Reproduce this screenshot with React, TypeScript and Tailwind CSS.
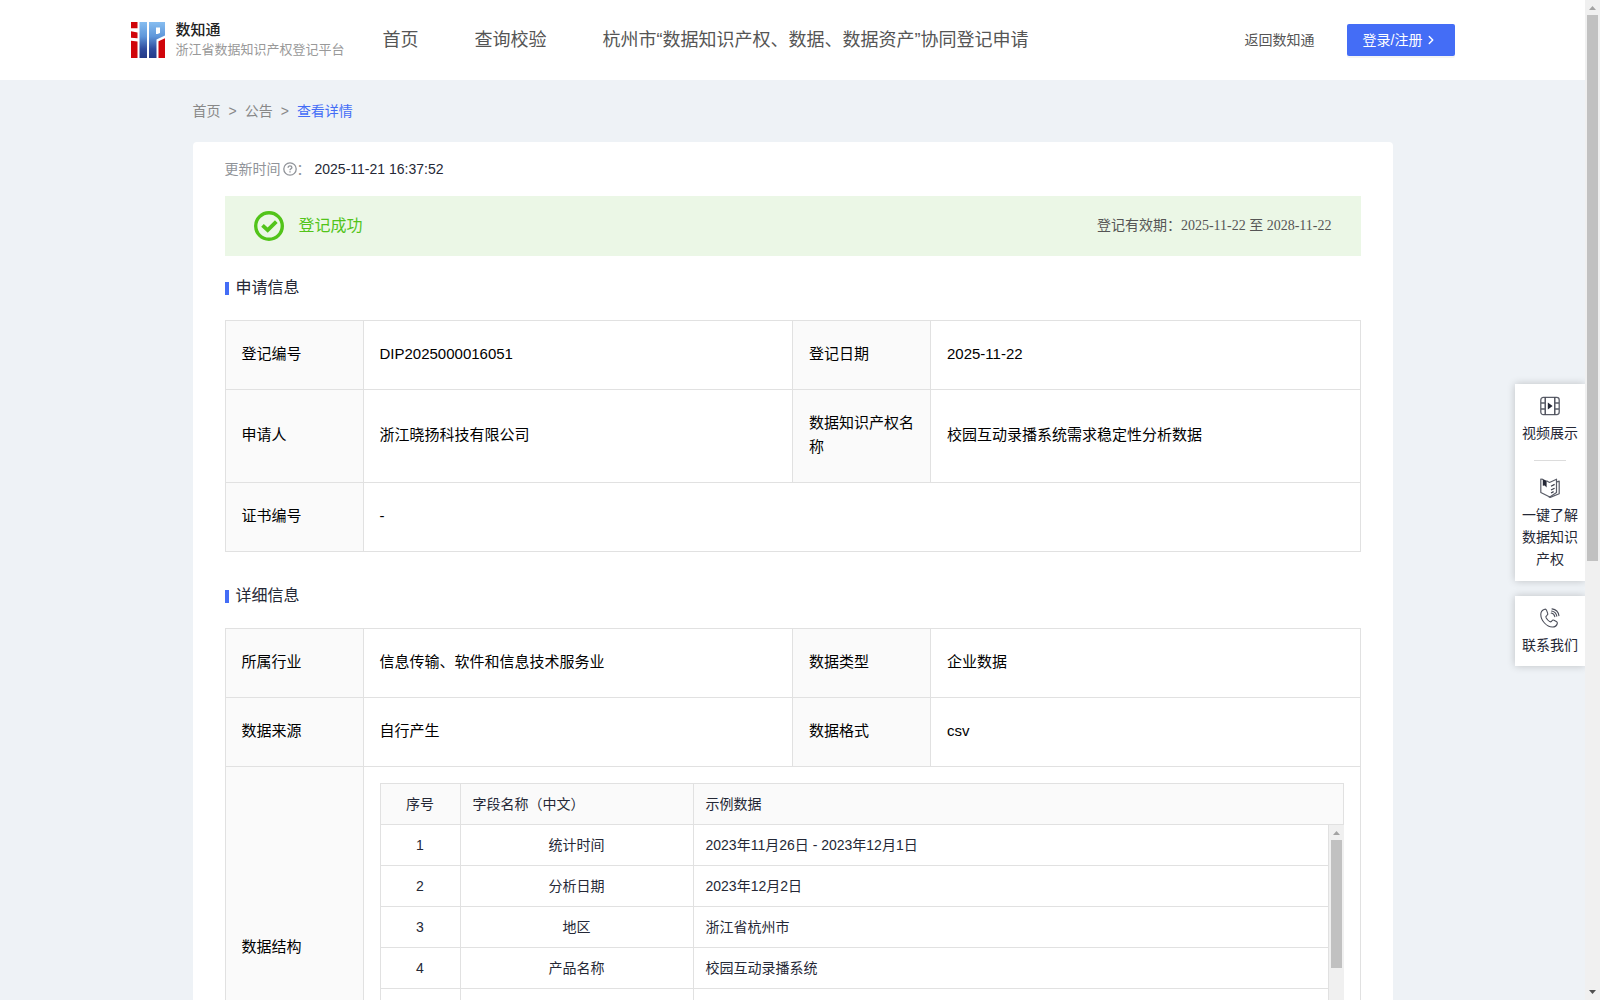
import type { ReactNode } from 'react';
import { ChevronRight } from 'lucide-react';

const sans = "font-['Liberation_Sans','Noto_Sans_CJK_SC',sans-serif]";

const navItems = ['首页', '查询校验', '杭州市“数据知识产权、数据、数据资产”协同登记申请'];

const fields = [
  { id: '1', name: '统计时间', sample: '2023年11月26日 - 2023年12月1日' },
  { id: '2', name: '分析日期', sample: '2023年12月2日' },
  { id: '3', name: '地区', sample: '浙江省杭州市' },
  { id: '4', name: '产品名称', sample: '校园互动录播系统' },
  { id: '', name: '', sample: '' },
  { id: '', name: '', sample: '' },
  { id: '', name: '', sample: '' },
];

function Logo() {
  return (
    <svg viewBox="0 0 34 36" className="h-9 w-[34px] shrink-0" aria-hidden="true">
      <defs>
        <linearGradient id="logoBlue" gradientUnits="userSpaceOnUse" x1="0" y1="0" x2="0" y2="36">
          <stop offset="0" stopColor="#86bdf0" />
          <stop offset="0.4" stopColor="#5f97da" />
          <stop offset="0.75" stopColor="#2f4c9e" />
          <stop offset="1" stopColor="#243a87" />
        </linearGradient>
      </defs>
      <path fill="#d0050b" d="M0 0h6.500v6.200H0zM0 9.200L6.500 10.500v5.700L0 15.800zM0 18.800L6.500 19.500V36H0z" />
      <path
        fill="url(#logoBlue)"
        fillRule="evenodd"
        d="M8.500 0h7.500v36H8.500zM18 0h16v13.500L25.500 17.500V36H18zM25 5.500v6.500h1.500L29 11V5.500z"
      />
      <path fill="#d0050b" d="M27.500 19.200L34 16.200V36h-6.500z" />
    </svg>
  );
}

function VideoIcon() {
  return (
    <svg viewBox="0 0 20 20" className="size-5" fill="none" stroke="#5a5d68" strokeWidth="1.300" aria-hidden="true">
      <rect x="0.800" y="1.400" width="18.400" height="17.200" rx="2.500" />
      <path d="M5.200 1.400v17.200M14.800 1.400v17.200" stroke="#3a3d49" />
      <path d="M1 7h4M1 13h4M15 7h4M15 13h4" />
      <path d="M7.800 6.600v6.800l4.800-3.400z" fill="#252836" stroke="none" />
    </svg>
  );
}

function BookIcon() {
  return (
    <svg viewBox="0 0 20 20" className="size-5" fill="none" stroke="#5a5d68" strokeWidth="1.200" strokeLinejoin="round" aria-hidden="true">
      <path d="M3 1.300L.8 1v13.500l9 4.500 6.700-4.500V1.200L9.500 4.500 6.500 2.800" />
      <path d="M17 3.800l2.200-.6v12.600l-9 3.600-1.500-.6" />
      <path d="M11 8.200l3.600-1.800M11 12l3.600-1.800M11 15l2.600-1.400" stroke="#3a3d49" />
      <path d="M2.800 1l3.800 1.800v6.700L4.700 7.400l-1.900.3z" fill="#252836" stroke="none" />
    </svg>
  );
}

function PhoneIcon() {
  return (
    <svg viewBox="0 0 20 20" className="size-5" fill="none" stroke="#4b4e5a" strokeWidth="1.100" strokeLinecap="round" strokeLinejoin="round" aria-hidden="true">
      <path d="M4.800 1.200C2.500 1.800.8 3.800.8 6.500c0 6 6 12.500 11.500 12.500 2.500 0 4.500-1.500 5-3.500.2-1-.3-1.600-1-2l-2.300-1.300c-.8-.4-1.600-.1-2 .6-.5.900-1.300 1.300-2.300.8-1.500-.9-2.800-2.300-3.600-3.800-.5-1-.1-1.900.8-2.400.8-.5 1.100-1.200.8-2L6.600 2.400c-.3-.8-.9-1.400-1.800-1.200z" />
      <path d="M11.200 5c1.800.4 3.200 1.800 3.600 3.600M11.600 3c2.700.5 4.700 2.500 5.200 5.200M12 .9c3.600.5 6.400 3.200 6.900 6.800" />
    </svg>
  );
}

function CheckIcon() {
  return (
    <svg viewBox="0 0 30 30" className="size-[30px]" fill="none" stroke="#52c41a" aria-hidden="true">
      <circle cx="15" cy="15" r="13.300" strokeWidth="3.400" />
      <path d="M8.500 14.300l5.200 4.900 8.600-8.500" strokeWidth="3.800" />
    </svg>
  );
}

function HelpIcon() {
  return (
    <svg viewBox="0 0 14 14" className="size-3.5" fill="none" stroke="#909399" strokeWidth="1.300" aria-hidden="true">
      <circle cx="7" cy="7" r="6.200" />
      <path d="M5.100 5.700c0-1.200.8-1.900 1.900-1.900s1.900.7 1.900 1.700c0 1.200-1.900 1.400-1.900 2.800M7 9.200v1.300" />
    </svg>
  );
}

function Arrow({ down = false }: { down?: boolean }) {
  return (
    <svg viewBox="0 0 15 15" className="size-[15px] shrink-0" aria-hidden="true">
      <path d={down ? 'M4 5h7L7.500 9z' : 'M4 10h7L7.500 6z'} fill={down ? '#505050' : '#a3a3a3'} />
    </svg>
  );
}

function SectionTitle({ children }: { children: ReactNode }) {
  return (
    <h2 className="flex items-center gap-[7px] text-base leading-6 text-[#252836]">
      <span className="h-[13px] w-1 bg-[#446df6]" />
      {children}
    </h2>
  );
}

function Label({ children }: { children: ReactNode }) {
  return (
    <th scope="row" className="border border-[#e1e1e1] bg-[#fafafa] px-4 pt-[21px] pb-[23px] text-left font-normal">
      {children}
    </th>
  );
}

function Value({ children, span }: { children: ReactNode; span?: number }) {
  return (
    <td colSpan={span} className="border border-[#e1e1e1] px-4 pt-[21px] pb-[23px]">
      {children}
    </td>
  );
}

function InfoTable({ children }: { children: ReactNode }) {
  return (
    <table className="w-full table-fixed border-collapse text-[15px] leading-6 text-black">
      <colgroup>
        <col className="w-[138px]" />
        <col />
        <col className="w-[138px]" />
        <col />
      </colgroup>
      <tbody>{children}</tbody>
    </table>
  );
}

function StructureTable() {
  const cell = 'border border-[#e1e1e1] px-3 py-2 font-normal';
  return (
    <div className="text-sm leading-6 text-[#252836]">
      <table className="w-full table-fixed border-collapse">
        <colgroup>
          <col className="w-20" />
          <col className="w-[233px]" />
          <col />
        </colgroup>
        <thead>
          <tr className="bg-[#fafafa]">
            <th className={cell}>序号</th>
            <th className={`${cell} text-left`}>字段名称（中文）</th>
            <th className={`${cell} text-left`}>示例数据</th>
          </tr>
        </thead>
      </table>
      <div className="flex h-[288px] overflow-hidden">
        <div className="min-w-0 flex-1">
          <table className="-mt-px w-full table-fixed border-collapse">
            <colgroup>
              <col className="w-20" />
              <col className="w-[233px]" />
              <col />
            </colgroup>
            <tbody>
              {fields.map((f, i) => (
                <tr key={i} className="h-[41px]">
                  <td className={`${cell} text-center`}>{f.id}</td>
                  <td className={`${cell} text-center`}>{f.name}</td>
                  <td className={cell}>{f.sample}</td>
                </tr>
              ))}
            </tbody>
          </table>
        </div>
        <div className="flex w-[15px] flex-col items-center bg-[#f0f0f0]">
          <Arrow />
          <div className="h-32 w-[11px] bg-[#c1c1c1]" />
        </div>
      </div>
    </div>
  );
}

function SideTools() {
  const button = 'flex w-full flex-col items-center gap-1.5 px-1.5 text-center text-sm leading-[22px]';
  return (
    <aside className="absolute top-96 right-0 flex w-[70px] flex-col gap-[15px] text-[#252836]">
      <div className="flex flex-col items-center bg-white pt-3 pb-[11px] shadow-[0_0_8px_rgba(0,0,0,0.2)]">
        <button className={button}>
          <VideoIcon />
          视频展示
        </button>
        <div className="mt-4 mb-[17px] h-px w-8 bg-[#dcdcdc]" />
        <button className={button}>
          <BookIcon />
          一键了解数据知识产权
        </button>
      </div>
      <div className="bg-white pt-3 pb-2.5 shadow-[0_0_8px_rgba(0,0,0,0.2)]">
        <button className={button}>
          <PhoneIcon />
          联系我们
        </button>
      </div>
    </aside>
  );
}

export default function App() {
  return (
    <div className={`flex h-screen overflow-hidden bg-[#eef2f6] ${sans}`}>
      <div className="relative min-w-0 flex-1 overflow-hidden">
        <header className="bg-white">
          <div className="mx-auto flex h-20 max-w-[1324px] items-center">
            <a href="#" className="flex w-[252px] shrink-0 items-center gap-[11px]">
              <Logo />
              <span className="flex flex-col whitespace-nowrap">
                <span className="text-[15px] leading-5 font-medium text-[#222]">数知通</span>
                <span className="text-[13px] leading-5 text-[#999]">浙江省数据知识产权登记平台</span>
              </span>
            </a>
            <nav className="flex flex-1 gap-14 text-lg leading-6 whitespace-nowrap text-[#555]">
              {navItems.map((item) => (
                <a key={item} href="#">
                  {item}
                </a>
              ))}
            </nav>
            <a href="#" className="mr-8 text-sm whitespace-nowrap text-[#555]">
              返回数知通
            </a>
            <button className="flex h-8 w-[108px] items-center gap-0.5 rounded-xs bg-[#446df6] pl-4 text-sm whitespace-nowrap text-white shadow-[0_2px_0_rgba(0,0,0,0.045)]">
              登录/注册
              <ChevronRight className="size-3.5" strokeWidth={2.5} />
            </button>
          </div>
        </header>

        <main className="mx-auto max-w-[1200px]">
          <nav aria-label="面包屑" className="flex h-[62px] items-center gap-2 text-sm text-[#888]">
            <a href="#">首页</a>
            <span>&gt;</span>
            <a href="#">公告</a>
            <span>&gt;</span>
            <a href="#" className="text-[#446df6]">
              查看详情
            </a>
          </nav>

          <div className="rounded bg-white px-8 pb-8">
            <p className="flex h-[54px] items-center text-sm text-[#909399]">
              更新时间
              <span className="ml-0.5">
                <HelpIcon />
              </span>
              ：<span className="ml-1 text-[#252836]">2025-11-21 16:37:52</span>
            </p>

            <div className="flex h-[60px] items-center bg-[#ebf7e6] pr-[29px] pl-[29px]">
              <CheckIcon />
              <span className="ml-[15px] text-base text-[#52c41a]">登记成功</span>
              <span className="ml-auto font-['Liberation_Serif','Noto_Sans_CJK_SC',serif] text-sm text-[#555]">
                登记有效期：2025-11-22 至 2028-11-22
              </span>
            </div>

            <section className="pt-5">
              <SectionTitle>申请信息</SectionTitle>
              <div className="mt-5">
                <InfoTable>
                  <tr>
                    <Label>登记编号</Label>
                    <Value>DIP2025000016051</Value>
                    <Label>登记日期</Label>
                    <Value>2025-11-22</Value>
                  </tr>
                  <tr>
                    <Label>申请人</Label>
                    <Value>浙江晓扬科技有限公司</Value>
                    <Label>数据知识产权名称</Label>
                    <Value>校园互动录播系统需求稳定性分析数据</Value>
                  </tr>
                  <tr>
                    <Label>证书编号</Label>
                    <Value span={3}>-</Value>
                  </tr>
                </InfoTable>
              </div>
            </section>

            <section className="pt-8">
              <SectionTitle>详细信息</SectionTitle>
              <div className="mt-5">
                <InfoTable>
                  <tr>
                    <Label>所属行业</Label>
                    <Value>信息传输、软件和信息技术服务业</Value>
                    <Label>数据类型</Label>
                    <Value>企业数据</Value>
                  </tr>
                  <tr>
                    <Label>数据来源</Label>
                    <Value>自行产生</Value>
                    <Label>数据格式</Label>
                    <Value>csv</Value>
                  </tr>
                  <tr>
                    <Label>数据结构</Label>
                    <td colSpan={3} className="border border-[#e1e1e1] p-4">
                      <StructureTable />
                    </td>
                  </tr>
                </InfoTable>
              </div>
            </section>
          </div>
        </main>

        <SideTools />
      </div>

      <div className="flex w-[15px] shrink-0 flex-col items-center bg-[#f0f0f0]">
        <Arrow />
        <div className="min-h-0 w-[11px] flex-[546] bg-[#c1c1c1]" />
        <div className="min-h-0 flex-[424]" />
        <Arrow down />
      </div>
    </div>
  );
}
